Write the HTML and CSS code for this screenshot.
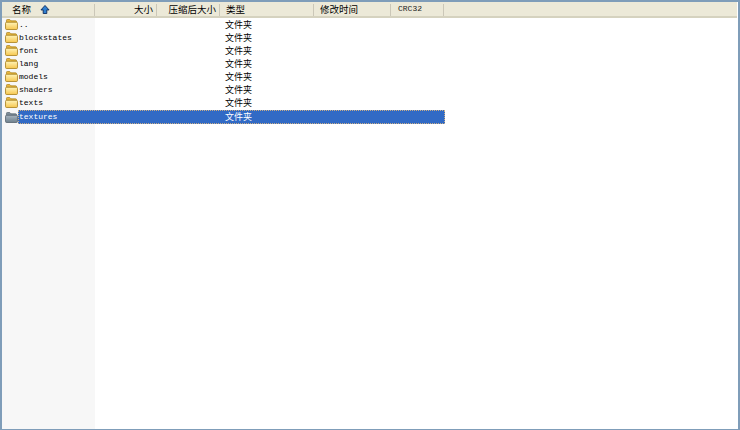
FILE: index.html
```html
<!DOCTYPE html>
<html lang="zh">
<head>
<meta charset="utf-8">
<title>文件列表</title>
<link rel="stylesheet" href="styles.css">
</head>
<body>
<svg class="defs" width="0" height="0">
  <defs>
    <linearGradient id="fy" x1="0" y1="0" x2="0" y2="1"><stop offset="0" stop-color="#fff4b8"/><stop offset="1" stop-color="#f6c64e"/></linearGradient>
    <linearGradient id="fg" x1="0" y1="0" x2="0" y2="1"><stop offset="0" stop-color="#a9b6c0"/><stop offset="1" stop-color="#6d7f8c"/></linearGradient>
    <symbol id="folder" viewBox="0 0 14 12">
      <path d="M1.5 2.5 L1.5 1.5 Q1.5 .5 2.5 .5 L5 .5 L6.5 2 L11.5 2 Q12.5 2 12.5 3 L12.5 4 L1.5 4 Z" fill="#e8b63c" stroke="#a87f1c" stroke-width=".8"/>
      <rect x=".5" y="3.5" width="13" height="8" rx="1.2" fill="url(#fy)" stroke="#a87f1c" stroke-width=".9"/>
    </symbol>
    <symbol id="folder-sel" viewBox="0 0 14 12">
      <path d="M1.5 2.5 L1.5 1.5 Q1.5 .5 2.5 .5 L5 .5 L6.5 2 L11.5 2 Q12.5 2 12.5 3 L12.5 4 L1.5 4 Z" fill="#7d8d99" stroke="#56646e" stroke-width=".8"/>
      <rect x=".5" y="3.5" width="13" height="8" rx="1.2" fill="url(#fg)" stroke="#56646e" stroke-width=".9"/>
    </symbol>
  </defs>
</svg>
<div class="frame">
  <div class="list">
    <div class="head">
      <div class="hcell name"><span>名称</span>
        <svg class="sort" width="10" height="9" viewBox="0 0 10 10"><path d="M5 .5 L9.5 5.5 L7 5.5 L7 9.5 L3 9.5 L3 5.5 L.5 5.5 Z" fill="#2f7fd0" stroke="#0b2a5c" stroke-width="1"/></svg>
      </div>
      <div class="hcell size">大小</div>
      <div class="hcell packed">压缩后大小</div>
      <div class="hcell type">类型</div>
      <div class="hcell mtime">修改时间</div>
      <div class="hcell crc">CRC32</div>
    </div>
    <div class="rows">
      <div class="row"><svg class="ico"><use href="#folder"/></svg><span class="fname">..</span><span class="ftype">文件夹</span></div>
      <div class="row"><svg class="ico"><use href="#folder"/></svg><span class="fname">blockstates</span><span class="ftype">文件夹</span></div>
      <div class="row"><svg class="ico"><use href="#folder"/></svg><span class="fname">font</span><span class="ftype">文件夹</span></div>
      <div class="row"><svg class="ico"><use href="#folder"/></svg><span class="fname">lang</span><span class="ftype">文件夹</span></div>
      <div class="row"><svg class="ico"><use href="#folder"/></svg><span class="fname">models</span><span class="ftype">文件夹</span></div>
      <div class="row"><svg class="ico"><use href="#folder"/></svg><span class="fname">shaders</span><span class="ftype">文件夹</span></div>
      <div class="row"><svg class="ico"><use href="#folder"/></svg><span class="fname">texts</span><span class="ftype">文件夹</span></div>
      <div class="row selected"><svg class="ico"><use href="#folder-sel"/></svg><div class="selbar"><span class="fname">textures</span><span class="ftype">文件夹</span></div></div>
    </div>
  </div>
</div>
</body>
</html>
```
FILE: styles.css
```css
* { box-sizing: border-box; }
html, body { margin: 0; height: 100%; background: #fff; }
.defs { position: absolute; }
.frame {
  width: 740px; height: 430px;
  border: 2px solid #7f9db9;
  border-bottom-width: 1px;
  background: #fff;
  font-family: "Noto Sans CJK SC", "Liberation Sans", sans-serif;
  font-size: 9px;
  color: #000;
  overflow: hidden;
}
.list {
  height: 100%;
  display: flex;
  flex-direction: column;
  background: linear-gradient(to right, #f7f7f7 93px, #fff 93px);
}
.head {
  display: flex;
  height: 16px;
  margin-right: 1px;
  background: #ece9d8;
  border-bottom: 2px solid #d5d2bf;
  font-size: 9.5px;
}
.hcell {
  height: 14px;
  line-height: 14px;
  white-space: nowrap;
  position: relative;
}
.hcell::after {
  content: "";
  position: absolute;
  right: 0; top: 2px; bottom: 0;
  width: 1px;
  background: #cbc7b8;
}
.name { width: 93px; padding-left: 10px; display: flex; align-items: center; }
.sort { margin-left: 9px; }
.size { width: 62px; padding-right: 4px; text-align: right; }
.packed { width: 63px; padding-right: 4px; text-align: right; }
.type { width: 94px; padding-left: 6px; }
.mtime { width: 77px; padding-left: 6px; }
.crc { width: 53px; padding-left: 7px; font-family: "Liberation Mono", monospace; font-size: 8px; color: #222; }
.row {
  display: flex;
  align-items: center;
  height: 13px;
  width: 443px;
  padding-left: 3px;
}
.ico { width: 13px; height: 11px; flex: none; }
.fname {
  width: 207px;
  padding-left: 1px;
  font-family: "Liberation Mono", monospace;
  font-size: 8px;
  line-height: 13px;
  flex: none;
}
.ftype { line-height: 13px; color: #000; }
.selbar {
  display: flex;
  align-items: center;
  flex: 1;
  height: 14px;
  padding-bottom: 1px;
  background: #316ac5;
  color: #fff;
  outline: 1px dotted #c9ad86;
  outline-offset: -1px;
}
.selbar .ftype { color: #fff; }
.selected { height: 14px; margin-top: 1px; }
```
